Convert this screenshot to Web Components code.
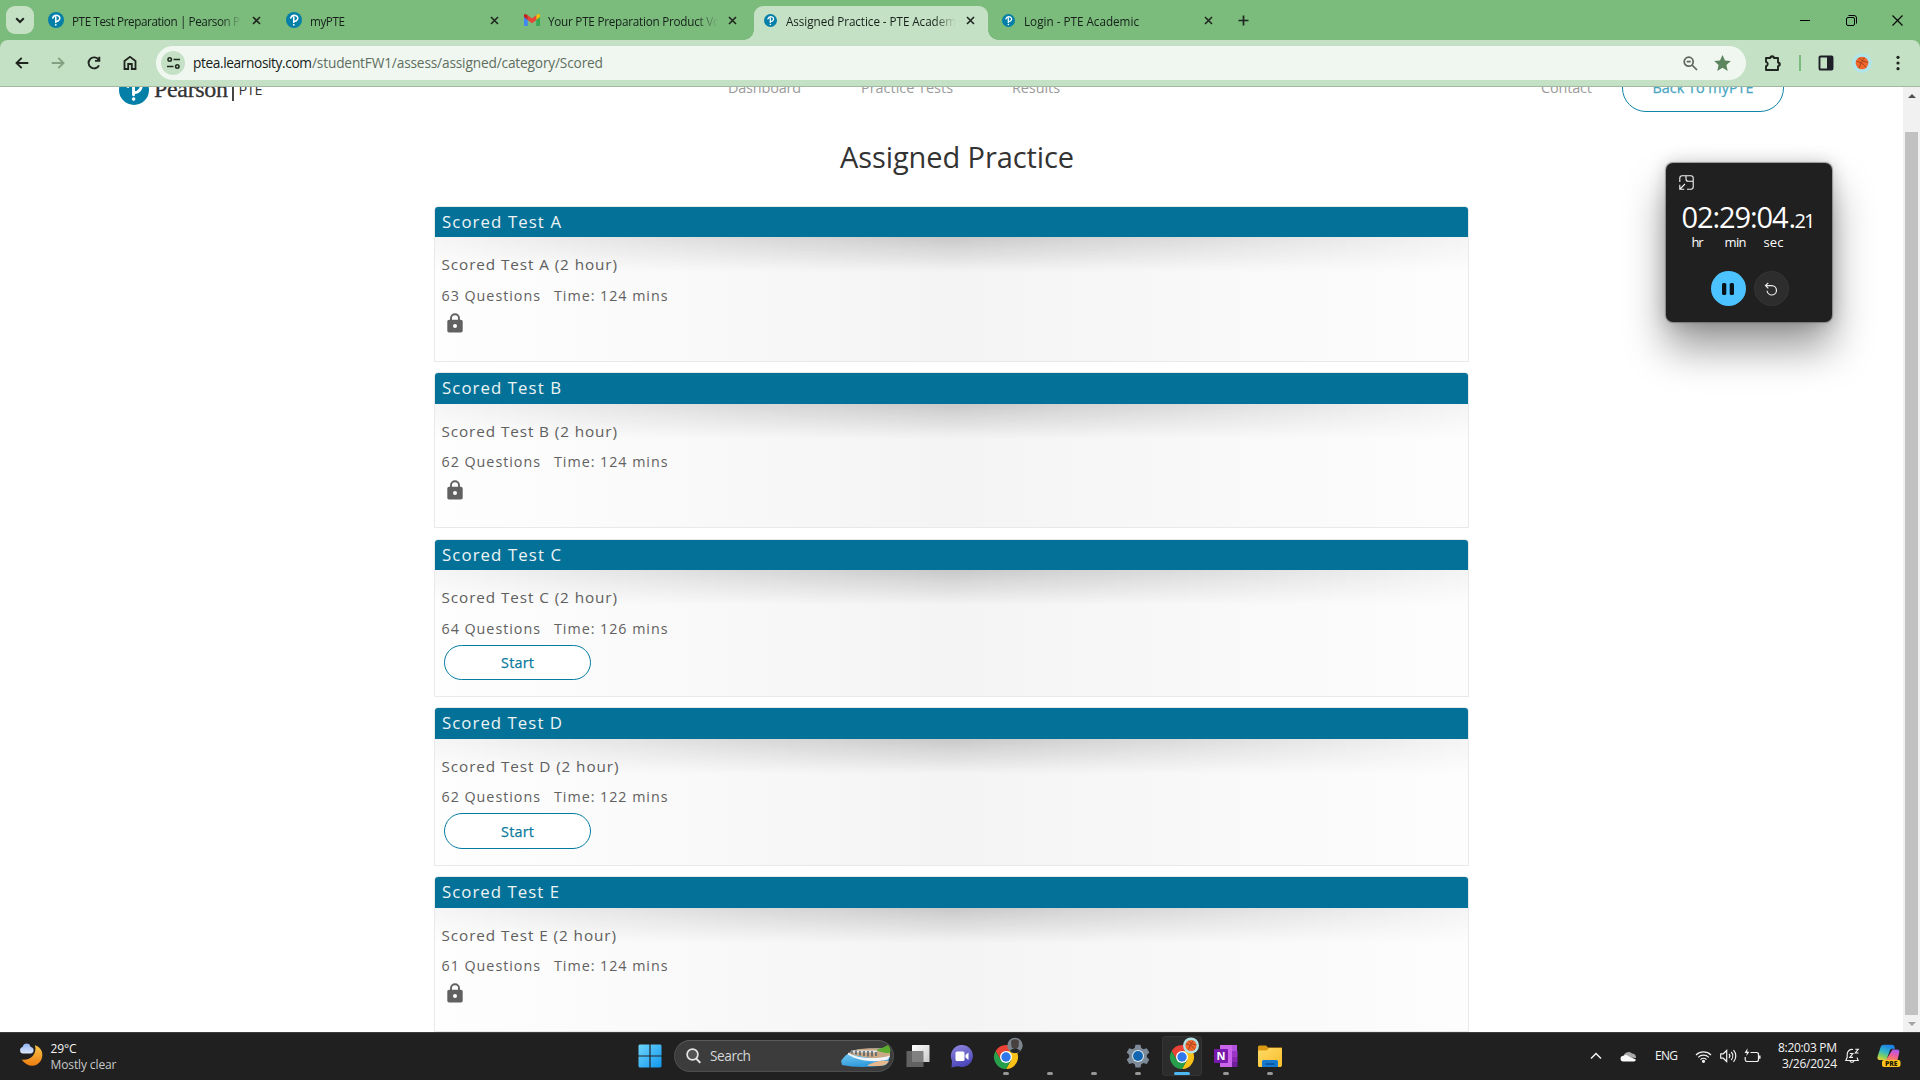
<!DOCTYPE html>
<html lang="en">
<head>
<meta charset="utf-8">
<title>Assigned Practice - PTE Academic</title>
<style>
html,body{margin:0;padding:0;width:1920px;height:1080px;overflow:hidden;background:#fff}
body{font-family:"Open Sans","Noto Sans",sans-serif}
</style>
</head>
<body>
<desk-top></desk-top>
<script>
const pearson = s => `<svg width="${s}" height="${s}" viewBox="0 0 32 32"><circle cx="16" cy="16" r="16" fill="#047fa8"/><path d="M9.500 12.200C11 8 15 6.300 18.700 7c4.600.9 6 5 4 8.200-1.700 2.700-4.700 3.800-7.200 3.600M15.500 10.500V21" fill="none" stroke="#fff" stroke-width="3.100" stroke-linecap="round"/><circle cx="15.600" cy="25.700" r="1.900" fill="#fff"/></svg>`;
const chrome = `<path d="M1.600 6A12 12 0 0 1 22.400 6H12L6.800 15z" fill="#ea4335"/><path d="M22.400 6A12 12 0 0 1 12 24L17.200 15 12 6z" fill="#fbc116"/><path d="M1.600 6A12 12 0 0 0 12 24L17.200 15H6.800z" fill="#28a04b"/><circle cx="12" cy="12" r="6" fill="#fff"/><circle cx="12" cy="12" r="4.700" fill="#2f77ea"/>`;
const ball = (x,y,r) => `<circle cx="${x}" cy="${y}" r="${r}" fill="#f0662b"/><path d="M${x-r*.9} ${y-r*.3}Q${x} ${y-r*.2} ${x+r*.7} ${y+r*.7}M${x-r*.5} ${y+r*.8}Q${x-r*.2} ${y} ${x+r*.4} ${y-r*.9}M${x-r*.5} ${y-r*.8}Q${x+r*.2} ${y-r*.1} ${x+r} ${y-r*.1}" stroke="#8a3a1c" stroke-width=".7" fill="none"/>`;
const ICONS = {
 pearson16: pearson(16), pearson12: pearson(13), pearson29: pearson(30),
 gmail:`<svg width="16" height="12" viewBox="0 0 16 12"><path d="M0 1.500V11a1 1 0 0 0 1 1h2.700V5z" fill="#4285f4"/><path d="M16 1.500V11a1 1 0 0 1-1 1h-2.700V5z" fill="#34a853"/><path d="M12.300 1.300L14 .2a1.300 1.300 0 0 1 2 1.200V3l-3.700 3z" fill="#fbbc04"/><path d="M3.700 6V1.300L8 4.600l4.300-3.300V6L8 9.200z" fill="#ea4335"/><path d="M0 3V1.500A1.300 1.300 0 0 1 2 .2l1.700 1.100V6z" fill="#c5221f"/></svg>`,
 chev:`<svg width="10" height="7" viewBox="0 0 10 7"><path d="M1.200 1.200L5 5l3.800-3.800" fill="none" stroke="#1c211c" stroke-width="2"/></svg>`,
 x:`<svg width="9" height="9" viewBox="0 0 9 9"><path d="M1 1l7 7M8 1L1 8" stroke="#1f261f" stroke-width="1.600"/></svg>`,
 plus:`<svg width="11" height="11" viewBox="0 0 11 11"><path d="M5.500 .5v10M.5 5.500h10" stroke="#1f261f" stroke-width="1.700"/></svg>`,
 min:`<svg width="10" height="10" viewBox="0 0 10 10"><path d="M0 5.500h10" stroke="#000"/></svg>`,
 max:`<svg width="11" height="11" viewBox="0 0 11 11" fill="none" stroke="#000"><rect x=".5" y="2.500" width="8" height="8" rx="1.500"/><path d="M2.500 .5h5.500a2.500 2.500 0 0 1 2.500 2.500v5.500"/></svg>`,
 close:`<svg width="11" height="11" viewBox="0 0 11 11"><path d="M.5 .5l10 10M10.500 .5l-10 10" stroke="#000" stroke-width="1.100"/></svg>`,
 back:`<svg width="14" height="12" viewBox="0 0 14 12"><path d="M13.300 6H1.800M6.700 .8L1.500 6l5.200 5.200" fill="none" stroke="#1f241f" stroke-width="1.900"/></svg>`,
 fwd:`<svg width="14" height="12" viewBox="0 0 14 12"><path d="M.7 6h11.500M7.300 .8L12.500 6l-5.200 5.200" fill="none" stroke="#83a083" stroke-width="1.900"/></svg>`,
 reload:`<svg width="14" height="14" viewBox="0 0 14 14"><path d="M12 9.300A5.500 5.500 0 1 1 11.600 3.800M12.300 .7v4.200H8" fill="none" stroke="#1f241f" stroke-width="1.900"/></svg>`,
 home:`<svg width="14" height="16" viewBox="0 0 14 16"><path d="M1.500 14V6L7 1.800 12.500 6v8H8.800V9H5.200v5z" fill="none" stroke="#1f241f" stroke-width="1.800"/></svg>`,
 tune:`<svg width="13" height="12" viewBox="0 0 13 12" fill="none" stroke="#1f2a1f" stroke-width="1.600"><circle cx="2.700" cy="2.500" r="1.700"/><path d="M6.500 2.500H13M0 9.500h6.500"/><circle cx="10.300" cy="9.500" r="1.700"/></svg>`,
 zoomout:`<svg width="15" height="15" viewBox="0 0 15 15" fill="none" stroke="#5c665c" stroke-width="1.700"><circle cx="5.700" cy="5.700" r="4.500"/><path d="M9 9l5 5M3.700 5.700h4"/></svg>`,
 star:`<svg width="17" height="16" viewBox="0 0 24 23"><path d="M12 0l3.600 7.900L24 8.700l-6.400 5.700L19.500 23 12 18.500 4.500 23l1.900-8.600L0 8.700l8.400-.8z" fill="#5c855f"/></svg>`,
 puzzle:`<svg width="18" height="18" viewBox="0 0 18 18"><path d="M2 4h4.300a1.800 1.800 0 0 1 3.600 0H14v4.500a1.800 1.800 0 0 1 0 3.600V16H2v-3.800a2.200 2.200 0 0 0 0-4.300z" fill="none" stroke="#1f241f" stroke-width="1.900" stroke-linejoin="round"/><path d="M6.500 3.500a1.700 1.700 0 0 1 3.200 0zM14.500 8.600a1.700 1.700 0 0 1 0 3.400z" fill="#1f241f"/></svg>`,
 panel:`<svg width="16" height="16" viewBox="0 0 16 16"><rect x="1.500" y="1.500" width="13" height="13" rx="1" fill="none" stroke="#1f1f28" stroke-width="1.900"/><path d="M9 1.500h5.500v13H9z" fill="#1f1f28"/></svg>`,
 avatar:`<svg width="20" height="20" viewBox="0 0 20 20"><circle cx="10" cy="10" r="9.800" fill="#b0e6ea"/>${ball(10,10,6.3)}</svg>`,
 dots:`<svg width="4" height="16" viewBox="0 0 4 16" fill="#1f241f"><circle cx="2" cy="2.300" r="1.600"/><circle cx="2" cy="8" r="1.600"/><circle cx="2" cy="13.700" r="1.600"/></svg>`,
 lock:`<svg width="16" height="20" viewBox="0 0 16 20"><path d="M4 8V5.200a4 4 0 0 1 8 0V8" fill="none" stroke="#616161" stroke-width="1.900"/><rect x=".3" y="6.800" width="15.400" height="12.700" rx="1.800" fill="#616161"/><circle cx="8" cy="13" r="2" fill="#fff"/></svg>`,
 up:`<svg width="8" height="4" viewBox="0 0 8 4"><path d="M0 4l4-4 4 4z" fill="#505050"/></svg>`,
 down:`<svg width="8" height="4" viewBox="0 0 8 4"><path d="M0 0l4 4 4-4z" fill="#a3a3a3"/></svg>`,
 dock:`<svg width="15" height="15" viewBox="0 0 15 15" fill="none" stroke="#f4f4f4" stroke-width="1.100"><path d="M.8 7V3A2.300 2.300 0 0 1 3 .8h9A2.300 2.300 0 0 1 14.200 3v9a2.300 2.300 0 0 1-2.200 2.200H8M7 .8V4a2.300 2.300 0 0 0 2.300 2.300h4.900M6 9l-5 5M.8 9.800v4.400h4.400"/></svg>`,
 pause:`<svg width="12" height="12" viewBox="0 0 12 12"><rect x="0" y="0" width="4.300" height="12" rx="1.500" fill="#07131b"/><rect x="7.700" y="0" width="4.300" height="12" rx="1.500" fill="#07131b"/></svg>`,
 reset:`<svg width="14" height="14" viewBox="0 0 14 14"><path d="M1.500 3.600h6.300a4.700 4.700 0 1 1-4.700 5.200M4.300 .8L1.500 3.600l2.800 2.800" fill="none" stroke="#eee" stroke-width="1.200"/></svg>`,
 weather:`<svg width="24" height="24" viewBox="0 0 24 24"><defs><linearGradient id="m" x2="0" y2="1"><stop stop-color="#f8c64a"/><stop offset="1" stop-color="#ee7d10"/></linearGradient><linearGradient id="c" x2="0" y2="1"><stop stop-color="#8fb2f0"/><stop offset="1" stop-color="#dce9fc"/></linearGradient></defs><path d="M16 2.200c7 2 9.300 9.500 5.800 15.500C18 24 9 25.300 2.500 16.500c8 1.500 16-5 13.500-14.300z" fill="url(#m)"/><path d="M4 10.500a3.300 3.300 0 0 1-.4-6.500C4.500-.6 11-.4 11.600 4a3.300 3.300 0 0 1 .4 6.500z" fill="url(#c)"/></svg>`,
 win:`<svg width="24" height="24" viewBox="0 0 24 24"><defs><linearGradient id="w" x2="1" y2="1"><stop stop-color="#6fd5fb"/><stop offset="1" stop-color="#1097ee"/></linearGradient></defs><path d="M1.500 .5H11.400V11.400H.5V1.500zM12.600 .5H22.500l1 1V11.400H12.600zM.5 12.600H11.400V23.500H1.500l-1-1zM12.600 12.600H23.500V22.500l-1 1h-9.900z" fill="url(#w)"/></svg>`,
 mag:`<svg width="15" height="16" viewBox="0 0 15 16"><circle cx="6.500" cy="6.500" r="5.400" fill="rgba(255,255,255,.12)" stroke="#e4e4e4" stroke-width="1.700"/><path d="M10.300 10.600l4 4.300" stroke="#e4e4e4" stroke-width="2"/></svg>`,
 ship:`<svg width="50" height="22" viewBox="0 0 50 22"><defs><linearGradient id="s" x2=".3" y2="1"><stop stop-color="#8fd8f4"/><stop offset="1" stop-color="#2f9bdc"/></linearGradient></defs><path d="M0 16C5 8 13 4 24 4l24-1c2 6 1 12-3 17-8 2-32 3-44 0z" fill="url(#s)"/><path d="M10 6c8-3 26-4 39-1v7C36 15 22 12 8 9z" fill="#c8a887"/><path d="M7 7.500c8 6 28 7.500 42 3l-2 4C33 18 17 16 7 9.500z" fill="#f2f5f7"/><path d="M10 6.500h26" stroke="#dfe7ec" stroke-width="2"/><path d="M11 5.500v3M15 5.500v4M19 6v4.500M23 6v5M27 6v5.500M31 6v5.500M35 7v4" stroke="#40505c" stroke-width="1.300"/><path d="M35 5c4-1 8-3 12-5 2 2 3 5 2 8-4 0-9-.5-14-3z" fill="#5cab2f"/><path d="M26 21c5-4 13-6 22-5-2 4-6 5-12 5z" fill="#e7b78e"/></svg>`,
 taskview:`<svg width="24" height="24" viewBox="0 0 24 24"><defs><linearGradient id="t" x2="1" y2="1"><stop stop-color="#fff"/><stop offset="1" stop-color="#c9c9c9"/></linearGradient></defs><rect x="6" y="1" width="17.500" height="17" rx=".6" fill="url(#t)"/><rect x=".5" y="7" width="17" height="16" rx=".6" fill="#6e6e6e" opacity=".85"/></svg>`,
 chat:`<svg width="24" height="24" viewBox="0 0 24 24"><defs><linearGradient id="q" x2="0.300" y2="1"><stop stop-color="#9188dc"/><stop offset="1" stop-color="#4b47bb"/></linearGradient></defs><path d="M12 1a11 11 0 1 1-4 21.300L1.500 23.500 2 17A11 11 0 0 1 12 1z" fill="url(#q)"/><rect x="5.500" y="7.500" width="9" height="9.500" rx="1.500" fill="#fff"/><path d="M15.500 11l3-2.500v7.500l-3-2.500z" fill="#fff"/></svg>`,
 chromeA:`<svg width="34" height="32" viewBox="0 0 34 32"><g transform="translate(2,7)">${chrome}</g><circle cx="23" cy="7.500" r="7.700" fill="#7c858d"/><path d="M19 3.500c1-3 7-3 8 0l-.5 5c-1.500 3.500-5.500 3.500-7 0z" fill="#47413f"/><path d="M18 13c1-3 9-3 10 0-2 2.700-8 2.700-10 0z" fill="#22262b"/></svg>`,
 chromeB:`<svg width="34" height="32" viewBox="0 0 34 32"><g transform="translate(2,7)">${chrome}</g><circle cx="23" cy="7.500" r="8" fill="#b4e3e6"/>${ball(23,7.500,5.5)}</svg>`,
 gear:`<svg width="24" height="24" viewBox="0 0 24 24"><path d="M9.500 .7h5l.8 3.300 2.200 1.300 3.300-1 2.500 4.300-2.500 2.300v2.400l2.500 2.300-2.500 4.300-3.300-1-2.200 1.300-.8 3.300h-5L8.700 20.200 6.500 18.900l-3.300 1L.7 15.600l2.500-2.300v-2.400L.7 8.600l2.500-4.300 3.300 1L8.700 4z" fill="#7d8a97"/><circle cx="12" cy="12" r="6" fill="#dfe9f1"/><circle cx="12" cy="12" r="5" fill="#1265b0"/></svg>`,
 onenote:`<svg width="24" height="24" viewBox="0 0 24 24"><path d="M6 1h17v22H6z" fill="#ca64ea"/><path d="M18 1h5v6h-5z" fill="#b452e0"/><path d="M18 7h5.500v5.500H18z" fill="#9a35c8"/><path d="M18 12.500h5.500V18H18z" fill="#8a28b4"/><path d="M18 18h5.500v5H18z" fill="#6f1f9a"/><rect x="0" y="5" width="14" height="14" rx="1" fill="#7719aa"/><text x="7" y="16" font-family="Open Sans,sans-serif" font-size="11" font-weight="700" fill="#fff" text-anchor="middle">N</text></svg>`,
 folder:`<svg width="24" height="24" viewBox="0 0 24 24"><defs><linearGradient id="f" x2="1" y2="1"><stop stop-color="#ffdb66"/><stop offset="1" stop-color="#f9bd2c"/></linearGradient></defs><path d="M0 3a1.500 1.500 0 0 1 1.500-1.500H8l2 2H24V7H0z" fill="#dc9a14"/><path d="M0 6.500h8.500L11 4h12l1 1v16.500L23 23H1l-1-1z" fill="url(#f)"/><path d="M4 23v-5.500A1.500 1.500 0 0 1 5.500 16h13a1.500 1.500 0 0 1 1.500 1.500V23z" fill="#1679d0"/><path d="M7.500 20h9" stroke="#0b4f98" stroke-width="1.600"/></svg>`,
 caret:`<svg width="12" height="8" viewBox="0 0 12 8"><path d="M1 6.500L6 1.500l5 5" fill="none" stroke="#f2f2f2" stroke-width="1.500"/></svg>`,
 cloud:`<svg width="17" height="11" viewBox="0 0 17 11"><path d="M3.500 6A5 5 0 0 1 12 2.500 4 4 0 0 1 16 7z" fill="#a9a9a9"/><path d="M3.300 10.500a2.900 2.900 0 0 1 .3-5.800C5 3.500 7.500 4 9 5.500l6.800 3c0 1.200-.8 2-2 2z" fill="#fafafa"/></svg>`,
 wifi:`<svg width="17" height="13" viewBox="0 0 17 13" fill="none" stroke="#f0f0f0" stroke-width="1.200"><path d="M1 5a10.500 10.500 0 0 1 15 0M3.200 7.400a7.400 7.400 0 0 1 10.600 0M5.500 9.600a4.300 4.300 0 0 1 6 0"/><circle cx="8.500" cy="11.300" r="1" fill="#f0f0f0"/></svg>`,
 vol:`<svg width="17" height="14" viewBox="0 0 17 14" fill="none" stroke="#f0f0f0" stroke-width="1.200"><path d="M.7 4.800v4.400h2.500l3.500 3.300v-11L3.200 4.800zM9 5a3 3 0 0 1 0 4M11.200 3a6 6 0 0 1 0 8M13.500 1.200a8.500 8.500 0 0 1 0 11.600"/></svg>`,
 bat:`<svg width="17" height="15" viewBox="0 0 17 15" fill="none" stroke="#f0f0f0" stroke-width="1.200"><path d="M6.500 3.500h6.200a1.800 1.800 0 0 1 1.800 1.800v5.400a1.800 1.800 0 0 1-1.800 1.800H3a1.800 1.800 0 0 1-1.800-1.800V8"/><path d="M15.800 6.500v3.200" stroke-width="1.500"/><path d="M3.600 -.7L.5 4h2.300l-.5 3L5.500 2.700H3.200z" fill="#f0f0f0" stroke="none"/></svg>`,
 bell:`<svg width="15" height="16" viewBox="0 0 15 16" fill="none" stroke="#f0f0f0" stroke-width="1.150"><path d="M8 1.500A4.800 4.800 0 0 0 2.200 6.300v3L.8 12.500h12.400L12 9.600M5 13a2.200 2.200 0 0 0 4 0M4.800 5.500h3L4.800 9.300h3.200M10.300 1.200h3L10.300 5h3.200"/></svg>`,
 copilot:`<svg width="24" height="24" viewBox="0 0 24 24"><defs><linearGradient id="k" x1=".6" x2=".2" y2="1"><stop stop-color="#1d7ee8"/><stop offset=".45" stop-color="#2fb6c8"/><stop offset=".75" stop-color="#7fcf62"/><stop offset="1" stop-color="#e3d43c"/></linearGradient><linearGradient id="l" x1=".6" x2=".3" y2="1"><stop stop-color="#a55af0"/><stop offset=".55" stop-color="#ee5d9b"/><stop offset="1" stop-color="#f78b4e"/></linearGradient></defs><path d="M7 .8h8c2 0 2.500 1.500 3 4h-2.500c-1.500 0-2.300.6-2.800 2L9.500 16H3c-2.500 0-3-1.500-2.300-4L3.500 3.500C4 1.800 5 .8 7 .8z" fill="url(#k)"/><path d="M15.500 5.500h4.500c2 0 2.800 1.500 2.200 3.500L20.500 16H9z" fill="url(#l)"/><rect x="5" y="16" width="18.500" height="7" rx="2" fill="#fcc41c"/><text x="14.200" y="22" font-family="Open Sans,sans-serif" font-size="6.800" font-weight="800" fill="#221a00" text-anchor="middle">PRE</text></svg>`
};

const define = (name, css, html) => customElements.define(name, class extends HTMLElement {
  constructor(){ super(); this.attachShadow({mode:'open'}); }
  connectedCallback(){
    if (this.shadowRoot.childNodes.length) return;
    const t = document.createElement('template');
    t.innerHTML = `<style>*{box-sizing:border-box}${css}</style>` + (typeof html === 'function' ? html(this) : html);
    this.shadowRoot.append(t.content.cloneNode(true));
  }
});

/* centred glyph inside a box whose size comes from the w and h attributes */
define('ui-icon', `:host{display:flex;flex:none;align-items:center;justify-content:center}svg{display:block;flex:none;overflow:visible}`, el => {
  el.style.width = (el.getAttribute('w') || 16) + 'px';
  if (el.hasAttribute('h')) el.style.height = el.getAttribute('h') + 'px';
  return ICONS[el.getAttribute('name')];
});

define('browser-tab', `:host{display:flex;flex:none;width:238px;height:34px;position:relative;color:#15201a}
 .tab{display:flex;flex:1;align-items:center;margin:0 3px;height:34px;padding:0 10px 0 8px;position:relative}
 ui-icon.f{margin-bottom:6px}.t{flex:none;width:174px;margin-left:8px;height:18px;line-height:18px;font-size:11.700px;white-space:nowrap;overflow:hidden;margin-bottom:5px;-webkit-mask:linear-gradient(90deg,#000 148px,transparent 170px);mask:linear-gradient(90deg,#000 148px,transparent 170px)}
 ui-icon.c{margin:0 0 6px 2px}
 .sep{width:2px;height:16px;background:#c5e1c5;margin:6px -1px 0 -1px;border-radius:1px}
 :host([active]) .tab{background:#c5e1c5;border-radius:9px 9px 0 0}
 :host([active]) .tab::before,:host([active]) .tab::after{content:"";position:absolute;bottom:0;width:10px;height:10px}
 :host([active]) .tab::before{left:-10px;background:radial-gradient(circle at 0 0,transparent 9.500px,#c5e1c5 10px)}
 :host([active]) .tab::after{right:-10px;background:radial-gradient(circle at 100% 0,transparent 9.500px,#c5e1c5 10px)}`,
 el => `<div class="tab"><ui-icon class="f" name="${el.getAttribute('icon')}" w="16"></ui-icon><div class="t"><fit-text w="${el.getAttribute('tw')}">${el.getAttribute('label')}</fit-text></div><ui-icon class="c" name="x" w="16"></ui-icon></div>${el.hasAttribute('sep') ? '<div class="sep"></div>' : ''}`);

define('tab-strip', `:host{display:flex;height:40px;background:#7bbb7c;padding:6px 0 0 6px}
 .drop{width:28px;height:28px;border-radius:9px;background:#c5e1c5;display:flex;align-items:center;justify-content:center;margin-right:3px}
 .plus{margin:0 0 6px 8px}.sp{flex:1}.w{display:flex;height:28px}`,
 `<div class="drop"><ui-icon name="chev" w="10"></ui-icon></div>
 <browser-tab sep icon="pearson16" tw="168" label="PTE Test Preparation | Pearson P"></browser-tab>
 <browser-tab sep icon="pearson16" tw="35" label="myPTE"></browser-tab>
 <browser-tab icon="gmail" tw="172" label="Your PTE Preparation Product Vo"></browser-tab>
 <browser-tab active icon="pearson12" tw="170" label="Assigned Practice - PTE Academ"></browser-tab>
 <browser-tab sep icon="pearson12" tw="115" label="Login - PTE Academic"></browser-tab>
 <ui-icon class="plus" name="plus" w="16" h="28"></ui-icon><div class="sp"></div>
 <div class="w"><ui-icon name="min" w="46"></ui-icon><ui-icon name="max" w="46"></ui-icon><ui-icon name="close" w="46"></ui-icon></div>`);

define('tool-bar', `:host{display:block;height:47px;background:#7bbb7c}
 .bar{display:flex;height:47px;align-items:center;background:#c5e1c5;border-radius:8px 8px 0 0;border-bottom:1px solid #a0b9a0;padding:0 4px}
 .omni{display:flex;flex:none;align-items:center;width:1590px;height:34px;border-radius:17px;background:#f0f7f0;margin:0 9px 0 8px;padding:0 12px 0 5px;font-size:13.700px;color:#16201a}
 .omni fit-text{margin-bottom:1px}
 .chip{width:24px;height:24px;border-radius:12px;background:#c5e1c5;display:flex;align-items:center;justify-content:center;margin-right:8px}
 .p{color:#5e6e61}.sp{flex:1}.s{width:2px;height:16px;background:#7bbb7c;margin:0 7px 0 8px}`,
 `<div class="bar"><ui-icon name="back" w="36"></ui-icon><ui-icon name="fwd" w="36"></ui-icon><ui-icon name="reload" w="36"></ui-icon><ui-icon name="home" w="36"></ui-icon>
 <div class="omni"><div class="chip"><ui-icon name="tune" w="14"></ui-icon></div><fit-text w="119">ptea.learnosity.com</fit-text><fit-text class="p" w="291">/studentFW1/assess/assigned/category/Scored</fit-text><div class="sp"></div><ui-icon name="zoomout" w="32"></ui-icon><ui-icon name="star" w="32" style="margin-right:-4px"></ui-icon></div>
 <ui-icon name="puzzle" w="36"></ui-icon><div class="s"></div><ui-icon name="panel" w="36"></ui-icon><ui-icon name="avatar" w="36"></ui-icon><ui-icon name="dots" w="36"></ui-icon></div>`);

define('site-header', `:host{display:flex;height:49px;margin-top:-24px;align-items:center;padding-left:119px;font-size:14.400px;color:#9b9b9b;line-height:20px}
 .brand{display:flex;align-items:center;width:609px;color:#333}
 .serif{font-family:"Liberation Serif",serif;font-size:24px;line-height:26px;margin:3px 0 0 5px;-webkit-text-stroke:.3px #333}
 .bar{width:1.500px;height:22px;background:#444;margin:5px 5px 0 4px}.pte{font-size:14.500px;margin-top:4px;line-height:20px}
 .brand ui-icon{margin-top:5px}
 .btn{width:162px;height:49px;border:1px solid #0f84a8;border-radius:24px;display:flex;align-items:center;justify-content:center;color:#47a5c0;font-weight:500;-webkit-text-stroke:.25px #47a5c0;margin-left:30px}`,
 `<div class="brand"><ui-icon name="pearson29" w="30"></ui-icon><fit-text class="serif" w="74">Pearson</fit-text><div class="bar"></div><fit-text class="pte" w="24">PTE</fit-text></div>
 <fit-text w="73">Dashboard</fit-text><fit-text w="92" style="margin-left:60px">Practice Tests</fit-text><fit-text w="48" style="margin-left:59px">Results</fit-text>
 <fit-text w="51" style="margin-left:481px">Contact</fit-text><div class="btn"><fit-text w="101">Back To myPTE</fit-text></div>`);

define('test-card', `:host{display:block;height:var(--h,156px);width:1035px;border:1px solid #e9e9e9;border-radius:4px 4px 0 0;background:linear-gradient(90deg,#fefefe,#f4f4f4 50%,#fdfdfd);color:#616161}
 .head{height:var(--hh,30px);line-height:30px;background:#047298;border-radius:3px 3px 0 0;color:#eef4f6;font-size:16.800px;padding-left:7px}
 .body{display:flex;flex-direction:column;padding:15px 0 0 6.500px;height:110px;position:relative}
 .body::before{content:"";position:absolute;left:0;right:0;top:0;height:35px;background:linear-gradient(90deg,rgba(0,0,0,.035),rgba(0,0,0,.175) 50%,rgba(0,0,0,.035));-webkit-mask:linear-gradient(#000,transparent);mask:linear-gradient(#000,transparent)}
 .sub{font-size:15.300px;line-height:24px;height:24px}
 .row{display:flex;gap:14px;font-size:14.300px;line-height:24px;height:24px;margin-top:var(--g,8px)}
 .lock{margin:5px 0 0 5.500px}:host([g]) .lock{margin-top:6px}
 .btn{margin:4px 0 0 2.500px;width:147px;height:var(--bh,38px);border:1px solid #047c9f;border-radius:19px;display:flex;align-items:center;justify-content:center;font-weight:500;-webkit-text-stroke:.25px #0a7b9c;font-size:14.400px;color:#0a7b9c;background:#fff;line-height:20px;padding-top:1px}`,
 el => { const n = el.getAttribute('n'), a = k => el.getAttribute(k);
 return `<div class="head"><fit-text w="${a('tw')}">Scored Test ${n}</fit-text></div><div class="body"><div class="sub"><fit-text w="${a('sw')}">Scored Test ${n} (2 hour)</fit-text></div><div class="row"><fit-text w="98.500">${a('q')} Questions</fit-text><fit-text w="113.500">Time: ${a('m')} mins</fit-text></div>${el.hasAttribute('open') ? '<div class="btn"><fit-text w="33">Start</fit-text></div>' : '<ui-icon class="lock" name="lock" w="16" h="20"></ui-icon>'}</div>`; });

define('practice-page', `:host{display:block;flex:none;width:1903px;height:945px;overflow:hidden;background:#fff}
 h1{margin:25px 0 29px;text-align:center;font-weight:400;font-size:29px;line-height:40px;height:40px;color:#333;padding-left:11px}
 .list{display:flex;flex-direction:column;padding-left:434px;gap:10px}`,
 `<site-header></site-header><h1><fit-text w="234">Assigned Practice</fit-text></h1>
 <div class="list"><test-card n="A" q="63" m="124" tw="119" sw="175.500"></test-card>
 <test-card g n="B" q="62" m="124" tw="119" sw="175.500" style="--hh:31px;--g:7px"></test-card>
 <test-card open n="C" q="64" m="126" tw="119" sw="175.500" style="--h:158px;margin-top:1px"></test-card>
 <test-card open n="D" q="62" m="122" tw="120" sw="177" style="--h:159px;--hh:31px;--g:7px"></test-card>
 <test-card n="E" q="61" m="124" tw="117" sw="174.500" style="--hh:31px;--g:7px"></test-card></div>`);

define('scroll-bar', `:host{display:flex;flex-direction:column;align-items:center;width:17px;height:945px;background:#f1f1f1}
 .thumb{width:13px;height:883px;background:#c1c1c1}.gap{height:28px}`,
 `<ui-icon name="up" w="17" h="17"></ui-icon><div class="gap"></div><div class="thumb"></div><ui-icon name="down" w="17" h="17"></ui-icon>`);

define('stop-watch', `:host{display:block;position:absolute;left:1666px;top:163px;width:166px;height:159px;background:#202020;border-radius:7px;color:#fff;box-shadow:0 0 1px 1px rgba(80,80,80,.5),0 26px 42px rgba(0,0,0,.4),0 0 18px rgba(0,0,0,.2);padding:12px 0 0 12.500px}
 .t{display:flex;align-items:baseline;margin:7px 0 0 3px;font-size:29px;line-height:40px;height:40px;white-space:nowrap}
 .s{font-size:20px}.l{display:flex;margin:-4px 0 0 13px;font-size:13px;line-height:18px}
 .b{display:flex;margin:20px 0 0 32px;gap:8px;align-items:center}
 .c{width:35px;height:35px;border-radius:50%;display:flex;align-items:center;justify-content:center;background:#4cc2ff}
 .d{background:#2d2d2d;border:1px solid #353535}`,
 `<ui-icon name="dock" w="15" h="15"></ui-icon>
 <div class="t"><fit-text w="107">02:29:04</fit-text><fit-text w="6">.</fit-text><fit-text class="s" w="21">21</fit-text></div>
 <div class="l"><fit-text w="12">hr</fit-text><fit-text w="22" style="margin-left:21px">min</fit-text><fit-text w="20" style="margin-left:17px">sec</fit-text></div>
 <div class="b"><div class="c"><ui-icon name="pause" w="12"></ui-icon></div><div class="c d"><ui-icon name="reset" w="14"></ui-icon></div></div>`);

define('task-button', `:host{display:flex;flex:none;flex-direction:column;align-items:center;width:40px;height:40px;margin:0 2px;border-radius:4px;position:relative}
 :host([active]){background:#2c2c2c;box-shadow:inset 0 0 0 1px #343434}
 .g{height:36px;display:flex;align-items:center;padding-top:4px}.g.big{padding:3px 0 4px 6px}
 .i{width:6px;height:3px;border-radius:2px;background:#969696}:host([active]) .i{width:16px;background:#4cb8f5}`,
 el => { const n = el.getAttribute('name'); return `<div class="g ${n && n.startsWith('chrome') ? 'big' : ''}">${n ? `<ui-icon name="${n}" w="24"></ui-icon>` : ''}</div>${el.hasAttribute('run') ? '<div class="i"></div>' : ''}`; });

define('task-bar', `:host{display:flex;height:48px;background:#202020;border-top:1px solid #3c3c3c;color:#f4f4f4;font-size:12px;line-height:16px;padding-top:3px}
 .wx{display:flex;width:637px;padding:7px 0 0 19px}.wx>div{margin:-2.500px 0 0 7.500px;display:flex;flex-direction:column}.dim{color:#c8c8c8}
 .search{display:flex;align-items:center;width:220px;height:32px;border-radius:16px;background:#3b3c3b;border:1px solid #4c4d4c;border-top-color:#5a5b5a;margin:4px 9px 0 11px;padding:0 2px 0 10px;font-size:13.700px;color:#d6d6d6}
 .apps{display:flex;margin-left:-7px}.sp{flex:1}.tray{display:flex;align-items:center;height:40px}
 .clock{display:flex;flex-direction:column;align-items:flex-end;width:60px;margin:0 8px 0 16px}`,
 `<div class="wx"><ui-icon name="weather" w="24" h="24"></ui-icon><div><fit-text w="26">29°C</fit-text><fit-text class="dim" w="66">Mostly clear</fit-text></div></div>
 <ui-icon name="win" w="26" h="40"></ui-icon>
 <div class="search"><ui-icon name="mag" w="16"></ui-icon><fit-text w="41" style="margin-left:9px">Search</fit-text><div class="sp"></div><ui-icon name="ship" w="50"></ui-icon></div>
 <div class="apps"><task-button name="taskview"></task-button><task-button name="chat"></task-button><task-button name="chromeA" run></task-button><task-button run></task-button><task-button run></task-button><task-button name="gear" run></task-button><task-button name="chromeB" run active></task-button><task-button name="onenote" run></task-button><task-button name="folder" run></task-button></div>
 <div class="sp"></div>
 <div class="tray"><ui-icon name="caret" w="16"></ui-icon><ui-icon name="cloud" w="17" style="margin-left:16px"></ui-icon><fit-text w="23" style="margin-left:18px">ENG</fit-text><ui-icon name="wifi" w="17" style="margin-left:17px"></ui-icon><ui-icon name="vol" w="17" style="margin-left:8px"></ui-icon><ui-icon name="bat" w="17" style="margin-left:7px"></ui-icon>
 <div class="clock"><fit-text w="59">8:20:03 PM</fit-text><fit-text w="55">3/26/2024</fit-text></div><ui-icon name="bell" w="15"></ui-icon><ui-icon name="copilot" w="24" style="margin:0 19px 0 17px"></ui-icon></div>`);

define('desk-top', `:host{display:flex;flex-direction:column;width:1920px;height:1080px;position:relative;overflow:hidden}
 .view{display:flex;height:945px}`,
 `<tab-strip></tab-strip><tool-bar></tool-bar><div class="view"><practice-page></practice-page><scroll-bar></scroll-bar></div><task-bar></task-bar><stop-watch></stop-watch>`);

/* one line of text whose tracking is tuned so that it spans w pixels */
customElements.define('fit-text', class extends HTMLElement {
  constructor(){
    super();
    this.attachShadow({mode:'open'}).innerHTML = `<style>:host{display:inline-block;flex:none;white-space:nowrap}span{display:inline-block;white-space:pre}</style><span><slot></slot></span>`;
  }
  connectedCallback(){
    const w = +this.getAttribute('w'), s = this.shadowRoot.querySelector('span'), n = this.textContent.length;
    this.style.width = w + 'px';
    if (n > 1) s.style.letterSpacing = ((w - s.getBoundingClientRect().width) / (n - 1)).toFixed(3) + 'px';
  }
});
</script>
</body>
</html>
